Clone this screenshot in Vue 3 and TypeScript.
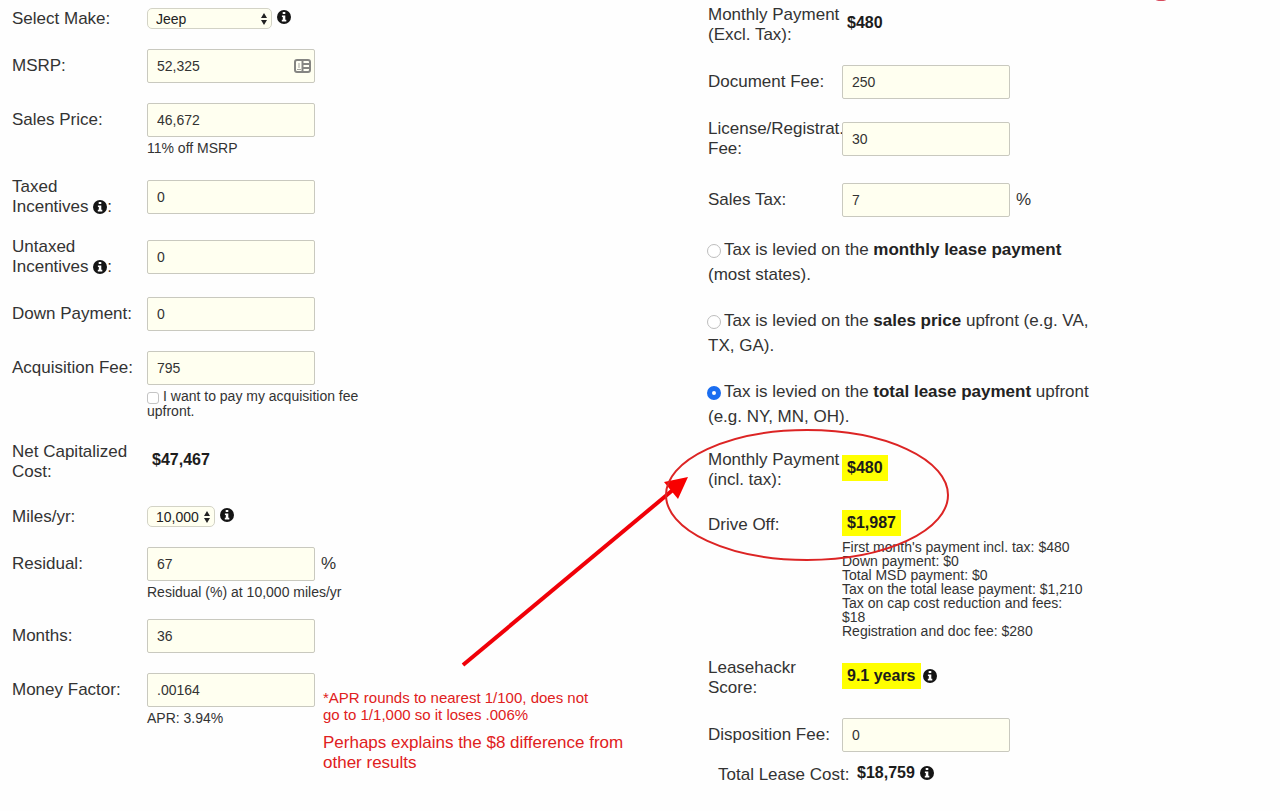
<script setup lang="ts">
import { h, reactive, ref } from 'vue'

const InfoIcon = () =>
  h('svg', { class: 'info', viewBox: '0 0 14 14', role: 'img', 'aria-label': 'More information' }, [
    h('circle', { cx: 7, cy: 7, r: 7, fill: '#151515' }),
    h('path', { d: 'M5.7 2h2.6v2H5.7zM4.9 5.4h3.4v4.4h1v1.6H4.8V9.8h1V7h-.9z', fill: '#fff' }),
  ])

const make = ref('Jeep')
const miles = ref('10,000')
const upfront = ref(false)
const taxMode = ref('total')

const form = reactive({
  msrp: '52,325',
  price: '46,672',
  taxed: '0',
  untaxed: '0',
  down: '0',
  acquisition: '795',
  residual: '67',
  months: '36',
  factor: '.00164',
  document: '250',
  registration: '30',
  salesTax: '7',
  disposition: '0',
})

const taxOptions = [
  { id: 'monthly', before: 'Tax is levied on the ', strong: 'monthly lease payment', after: ' (most states).' },
  { id: 'price', before: 'Tax is levied on the ', strong: 'sales price', after: ' upfront (e.g. VA, TX, GA).' },
  { id: 'total', before: 'Tax is levied on the ', strong: 'total lease payment', after: ' upfront (e.g. NY, MN, OH).' },
]

const driveOffItems = [
  "First month's payment incl. tax: $480",
  'Down payment: $0',
  'Total MSD payment: $0',
  'Tax on the total lease payment: $1,210',
  'Tax on cap cost reduction and fees: $18',
  'Registration and doc fee: $280',
]
</script>

<template>
  <main class="calculator">
    <form class="column left" @submit.prevent>
      <div class="row">
        <label for="make">Select Make:</label>
        <span class="picker wide">
          <select id="make" v-model="make"><option>Jeep</option></select>
          <svg viewBox="0 0 8 14" aria-hidden="true"><path d="M4 1l3 5H1zM4 13L1 8h6z" /></svg>
        </span>
        <InfoIcon />
      </div>
      <div class="row">
        <label for="msrp">MSRP:</label>
        <span class="card-field">
          <input id="msrp" v-model="form.msrp" type="text" />
          <svg viewBox="0 0 17 14" aria-hidden="true">
            <rect x="1" y="1" width="15" height="12" rx="2" fill="#fffff4" stroke="#858582" stroke-width="2" />
            <path d="M8.5 1.500v11M9 5h6M9 9h6" fill="none" stroke="#858582" stroke-width="2" />
            <path d="M5 4v5M3 10.5h4" fill="none" stroke="#a5a5a0" stroke-width="1" />
          </svg>
        </span>
      </div>
      <div class="row">
        <label for="price">Sales Price:</label>
        <input id="price" v-model="form.price" type="text" />
      </div>
      <p class="hint">11% off MSRP</p>
      <div class="row after-hint">
        <label for="taxed">Taxed<br />Incentives <InfoIcon />:</label>
        <input id="taxed" v-model="form.taxed" type="text" />
      </div>
      <div class="row">
        <label for="untaxed">Untaxed<br />Incentives <InfoIcon />:</label>
        <input id="untaxed" v-model="form.untaxed" type="text" />
      </div>
      <div class="row">
        <label for="down">Down Payment:</label>
        <input id="down" v-model="form.down" type="text" />
      </div>
      <div class="row">
        <label for="acquisition">Acquisition Fee:</label>
        <input id="acquisition" v-model="form.acquisition" type="text" />
      </div>
      <label class="hint"><input v-model="upfront" type="checkbox" />I want to pay my acquisition fee upfront.</label>
      <div class="row group-start">
        <span class="label">Net Capitalized Cost:</span>
        <output class="value">$47,467</output>
      </div>
      <div class="row group-start">
        <label for="miles">Miles/yr:</label>
        <span class="picker">
          <select id="miles" v-model="miles"><option>10,000</option></select>
          <svg viewBox="0 0 8 14" aria-hidden="true"><path d="M4 1l3 5H1zM4 13L1 8h6z" /></svg>
        </span>
        <InfoIcon />
      </div>
      <div class="row">
        <label for="residual">Residual:</label>
        <input id="residual" v-model="form.residual" type="text" />
        <span class="unit">%</span>
      </div>
      <p class="hint">Residual (%) at 10,000 miles/yr</p>
      <div class="row">
        <label for="months">Months:</label>
        <input id="months" v-model="form.months" type="text" />
      </div>
      <div class="row">
        <label for="factor">Money Factor:</label>
        <input id="factor" v-model="form.factor" type="text" />
      </div>
      <p class="hint">APR: 3.94%</p>
    </form>

    <form class="column right" @submit.prevent>
      <div class="row">
        <span class="label">Monthly Payment (Excl. Tax):</span>
        <output class="value">$480</output>
      </div>
      <div class="row">
        <label for="document">Document Fee:</label>
        <input id="document" v-model="form.document" type="text" />
      </div>
      <div class="row">
        <label for="registration">License/Registrat. Fee:</label>
        <input id="registration" v-model="form.registration" type="text" />
      </div>
      <div class="row group-start">
        <label for="sales-tax">Sales Tax:</label>
        <input id="sales-tax" v-model="form.salesTax" type="text" />
        <span class="unit">%</span>
      </div>
      <label v-for="option in taxOptions" :key="option.id" class="choice">
        <input v-model="taxMode" type="radio" name="tax" :value="option.id" />{{ option.before }}<strong>{{ option.strong }}</strong>{{ option.after }}
      </label>
      <div class="row">
        <span class="label">Monthly Payment (incl. tax):</span>
        <output class="value marked">$480</output>
      </div>
      <div class="row">
        <span class="label">Drive Off:</span>
        <output class="value marked">$1,987</output>
      </div>
      <ul class="hint breakdown">
        <li v-for="item in driveOffItems" :key="item">{{ item }}</li>
      </ul>
      <div class="row">
        <span class="label">Leasehackr Score:</span>
        <output class="value marked">9.1 years</output>
        <InfoIcon />
      </div>
      <div class="row">
        <label for="disposition">Disposition Fee:</label>
        <input id="disposition" v-model="form.disposition" type="text" />
      </div>
      <div class="row total">
        <span class="label">Total Lease Cost:</span>
        <output class="value">$18,759</output>
        <InfoIcon />
      </div>
    </form>

    <aside class="note">
      <p class="note-small">*APR rounds to nearest 1/100, does not go to 1/1,000 so it loses .006%</p>
      <p class="note-large">Perhaps explains the $8 difference from other results</p>
    </aside>
    <svg class="markup" viewBox="0 0 1280 811" aria-hidden="true">
      <path d="M463 665L674 489" stroke="#f00008" stroke-width="4" />
      <path d="M688 477L664 482L678 499Z" fill="#f80000" />
      <ellipse cx="807" cy="495" rx="141" ry="65" fill="none" stroke="#dc2424" stroke-width="2" />
      <ellipse cx="1161" cy="-1" rx="6" ry="2" fill="#d84a5c" />
    </svg>
  </main>
</template>

<style>
body {
  margin: 0;
  background: #fefefe;
}
</style>

<style scoped>
* {
  box-sizing: border-box;
}
.calculator {
  position: relative;
  display: grid;
  grid-template-columns: 87fr 70fr;
  padding: 0 12px;
  overflow: hidden;
  color: #333;
  font: 17px/20px "Liberation Sans", Arial, sans-serif;
}
.column {
  --label: 135px;
  display: flex;
  flex-direction: column;
  gap: 20px;
}
.left {
  padding-top: 8px;
}
.right {
  --label: 134px;
  padding: 5px 0 16px;
}
.row {
  display: flex;
  align-items: center;
}
.row > label,
.label {
  flex: none;
  width: var(--label);
}
input[type='text'] {
  width: 168px;
  height: 34px;
  padding: 0 9px;
  border: 1px solid #c9c9bf;
  border-radius: 2px;
  background: #fffff0;
  color: #333;
  font: 14px/20px "Liberation Sans", Arial, sans-serif;
}
.card-field {
  position: relative;
}
.card-field input {
  display: block;
}
.card-field svg {
  position: absolute;
  top: 10px;
  right: 4px;
  width: 17px;
  height: 14px;
}
.picker {
  position: relative;
}
.picker select {
  display: block;
  height: 21px;
  padding: 0 15px 0 8px;
  border: 1px solid #d3d3c6;
  border-radius: 5px;
  background: #fffff0;
  color: #222;
  font: 14px/18px "Liberation Sans", Arial, sans-serif;
  appearance: none;
}
.wide select {
  width: 125px;
}
.picker svg {
  position: absolute;
  top: 4px;
  right: 4px;
  width: 8px;
  height: 14px;
  fill: #222;
  pointer-events: none;
}
.info {
  width: 14px;
  height: 14px;
  vertical-align: -2px;
}
.row > .info {
  margin-bottom: 4px;
}
.picker + .info {
  margin-left: 5px;
}
.marked + .info {
  margin-left: 2px;
}
.unit {
  margin-left: 6px;
}
.hint {
  display: block;
  width: 244px;
  margin: -16px 0 0 var(--label);
  padding: 0;
  font-size: 14px;
  line-height: 14px;
  list-style: none;
}
.left .hint {
  width: 216px;
}
.right .breakdown {
  margin-top: -20px;
}
.after-hint {
  margin-top: 2px;
}
.group-start {
  margin-top: 4px;
}
.hint input {
  appearance: none;
  width: 12px;
  height: 12px;
  margin: 0 4px 0 0;
  border: 1px solid #c4c4c4;
  border-radius: 3px;
  background: #fff;
  vertical-align: -3px;
}
.value {
  margin-bottom: 4px;
  padding: 0 5px;
  color: #1c1c1c;
  font-size: 16px;
  font-weight: bold;
  line-height: 26px;
}
.value.marked {
  background: #ff0;
}
.choice {
  max-width: 384px;
  line-height: 25px;
  margin-bottom: 1px;
}
.choice input {
  appearance: none;
  width: 14px;
  height: 14px;
  margin: 0 3px 0 -1px;
  border: 1px solid #bdbdbd;
  border-radius: 50%;
  background: #fff;
  vertical-align: -3px;
}
.choice input:checked {
  border: 5px solid #1a6df0;
}
.choice strong {
  color: #222;
}
.total {
  margin-top: -12px;
  padding-left: 10px;
}
.note {
  position: absolute;
  top: 689px;
  left: 323px;
  width: 320px;
  color: #e02020;
}
.note p {
  margin: 0;
}
.note .note-small {
  width: 280px;
  margin-bottom: 10px;
  font-size: 15px;
  line-height: 17px;
}
.markup {
  position: absolute;
  top: 0;
  left: 0;
  width: 1280px;
  height: 811px;
  pointer-events: none;
}
</style>
